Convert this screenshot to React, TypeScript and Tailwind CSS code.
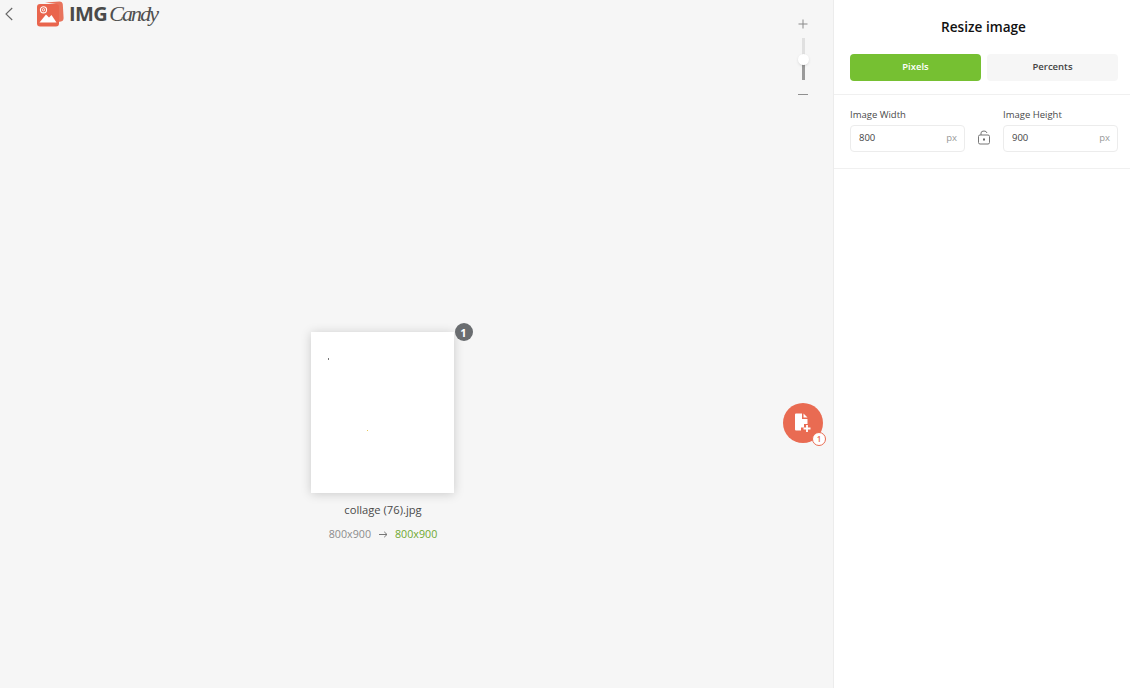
import React from 'react';

const Logo = () => (
  <div className="flex items-center">
    <svg width="28" height="27" viewBox="0 0 28 27" className="shrink-0">
      <path d="M9 1.5 L23.5 0.5 Q26.5 0.5 26.8 3.5 L27.6 17 Q27.6 20 25 20.5 L22 21 L20 3 Z" fill="#e8735c" />
      <rect x="1" y="3" width="22" height="22.5" rx="3" fill="#e9654d" />
      <path d="M3.5 21.5 L10 13.5 L13 16.5 L15.5 14 L20.5 21.5 Z" fill="#fff" />
      <circle cx="7.5" cy="8.8" r="3.1" fill="none" stroke="#fff" strokeWidth="1.1" />
      <circle cx="7.5" cy="8.8" r="1.2" fill="none" stroke="#fff" strokeWidth="0.9" />
    </svg>
    <span className="ml-[5px] font-['Open_Sans',sans-serif] text-[20px] leading-none font-bold tracking-[-0.6px] text-[#4a4a4a]">
      IMG
    </span>
    <span className="ml-[2px] font-['Liberation_Serif',serif] text-[22px] leading-none tracking-[-1.9px] italic text-[#4f4f4f]">
      Candy
    </span>
  </div>
);

const SizeField = ({ label, value }: { label: string; value: string }) => (
  <div className="w-[115px]">
    <label className="block text-[9.5px] leading-[14px] text-[#4a4a4a]">{label}</label>
    <div className="mt-[3px] flex h-[27px] items-center justify-between rounded-[4px] border border-[#ececec] bg-white pr-[7px] pl-2 text-[9.5px]">
      <span className="text-[#444]">{value}</span>
      <span className="text-[#999]">px</span>
    </div>
  </div>
);

const ZoomControl = () => (
  <div className="flex flex-col items-center">
    <svg width="10" height="10" viewBox="0 0 10 10">
      <path d="M5 0.5V9.5M0.5 5H9.5" stroke="#8a8a8a" strokeWidth="1" />
    </svg>
    <div className="relative mt-[9px] flex h-[42px] w-[3px] flex-col">
      <div className="h-[21px] bg-[#e0e0e0]" />
      <div className="h-[21px] bg-[#9a9a9a]" />
      <div className="absolute top-[16px] -left-[4px] h-[11px] w-[11px] rounded-full bg-white shadow-sm" />
    </div>
    <div className="mt-[14px] h-px w-[10px] bg-[#8f8f8f]" />
  </div>
);

const AddFileButton = () => (
  <button className="relative flex h-10 w-10 items-center justify-center rounded-full bg-[#e96b52]">
    <svg width="18" height="20" viewBox="0 0 18 20">
      <path d="M1 1.5 Q1 0.5 2 0.5 H8 V6 H13.5 V11 H10 V14.5 H7 V17.5 H2 Q1 17.5 1 16.5 Z" fill="#fff" />
      <path d="M9.5 0.5 L13.5 4.5 H9.5 Z" fill="#fff" />
      <path d="M13 12 V19 M9.5 15.5 H16.5" stroke="#fff" strokeWidth="1.8" />
    </svg>
    <span className="absolute -right-[3px] -bottom-[3px] flex h-[14px] w-[14px] items-center justify-center rounded-full border border-[#e96b52] bg-white text-[8px] leading-none font-semibold text-[#e9654d]">
      1
    </span>
  </button>
);

export default function App() {
  return (
    <div className="flex h-[688px] w-[1130px] overflow-hidden bg-[#f6f6f6] font-['Open_Sans',sans-serif]">
      <main className="flex h-full w-[833px] shrink-0 justify-between">
        <div className="flex w-[764px] flex-col">
          <header className="flex h-[28px] items-center">
            <svg width="8" height="14" viewBox="0 0 8 14" className="ml-[5px] shrink-0">
              <path d="M7.2 1 L1 7 L7.2 13" fill="none" stroke="#666" strokeWidth="1.1" />
            </svg>
            <div className="ml-[23px]">
              <Logo />
            </div>
          </header>
          <div className="mt-[304px] flex flex-col items-center">
            <div className="relative h-[161px] w-[143px] bg-white shadow-[0_1px_10px_rgba(0,0,0,0.18)]">
              <span className="absolute top-[26px] left-[17px] h-[2px] w-px bg-[#777]" />
              <span className="absolute top-[98px] left-[56px] h-px w-px bg-[#e8c95a]" />
              <span className="absolute -top-[9px] -right-[19px] flex h-[18px] w-[18px] items-center justify-center rounded-full bg-[#6a6d70] text-[11px] leading-none font-bold text-white">
                1
              </span>
            </div>
            <p className="mt-[8px] pl-[2px] text-[11.2px] leading-[17px] font-medium text-[#4a4a4a]">collage (76).jpg</p>
            <div className="mt-[8px] flex items-center pl-[2px] text-[10.7px] leading-[17px]">
              <span className="text-[#8c8c8c]">800x900</span>
              <svg width="9" height="7" viewBox="0 0 9 7" className="mr-[7px] ml-2 shrink-0">
                <path d="M0 3.5 H8 M5.2 0.8 L8 3.5 L5.2 6.2" fill="none" stroke="#777" strokeWidth="1" />
              </svg>
              <span className="text-[#6fa82f]">800x900</span>
            </div>
          </div>
        </div>
        <div className="flex w-[60px] flex-col items-center pt-[19px]">
          <ZoomControl />
          <div className="mt-[308px]">
            <AddFileButton />
          </div>
        </div>
      </main>

      <aside className="h-full w-[297px] shrink-0 border-l border-[#ececec] bg-white">
        <h1 className="pt-[17px] pl-[3px] text-center text-[13.6px] leading-[19px] font-semibold text-[#111]">
          Resize image
        </h1>
        <div className="flex gap-[6px] border-b border-[#f0f0f0] pt-[18px] pr-3 pb-[13px] pl-4">
          <button className="h-[27px] w-[131px] rounded-[4px] bg-[#76c032] text-[9.5px] font-semibold text-white">
            Pixels
          </button>
          <button className="h-[27px] w-[131px] rounded-[4px] bg-[#f6f6f6] text-[9.5px] font-semibold text-[#444]">
            Percents
          </button>
        </div>
        <div className="flex items-end gap-[12px] border-b border-[#f0f0f0] pt-[13px] pr-3 pb-4 pl-4">
          <SizeField label="Image Width" value="800" />
          <svg width="14" height="15" viewBox="0 0 14 15" className="mb-[7px] shrink-0">
            <rect x="1.5" y="5" width="11" height="9" rx="1.5" fill="none" stroke="#777" strokeWidth="1" />
            <path d="M4 5 V3 Q4 1 7 1 Q9.5 1 10 3" fill="none" stroke="#777" strokeWidth="1" />
            <rect x="6" y="8.5" width="2" height="2" fill="#666" />
          </svg>
          <SizeField label="Image Height" value="900" />
        </div>
      </aside>
    </div>
  );
}
